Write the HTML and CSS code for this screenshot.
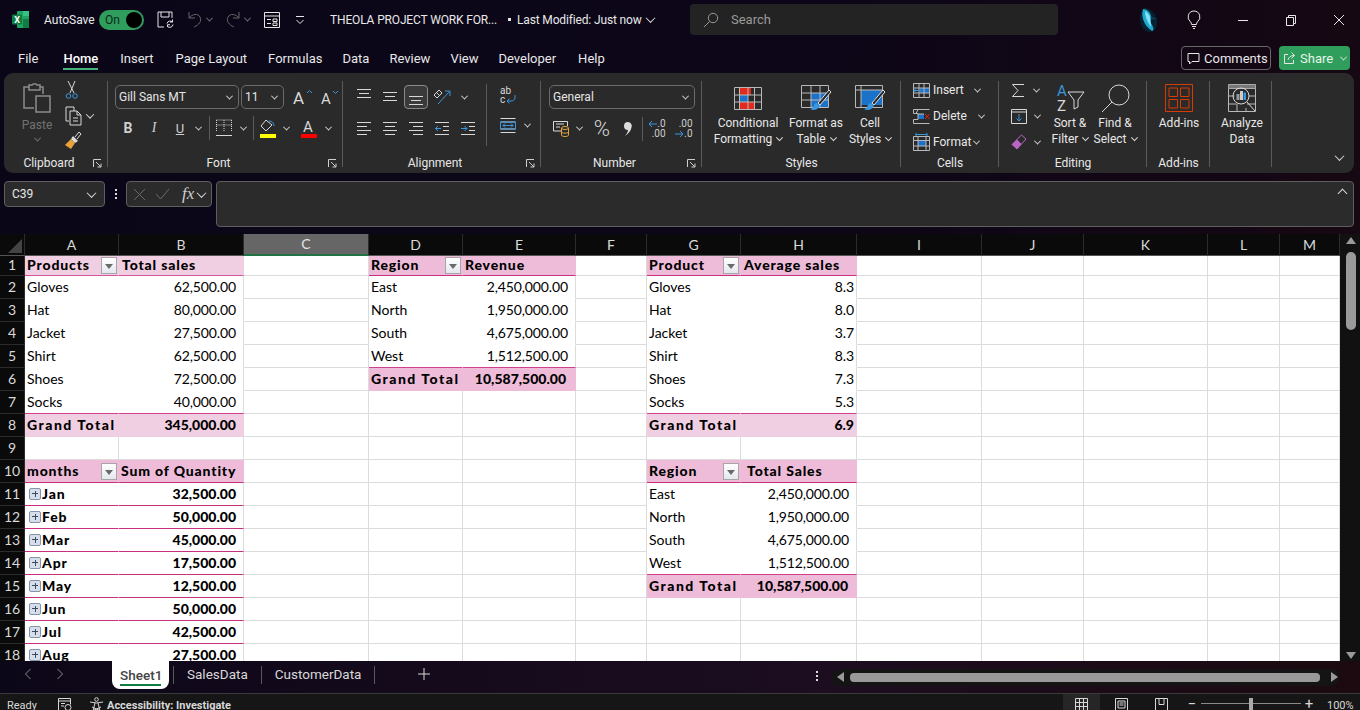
FILE: index.html
```html
<!DOCTYPE html>
<html lang="en">
<head>
<meta charset="utf-8">
<title>THEOLA PROJECT WORK FOR...</title>
<link rel="stylesheet" href="styles.css">
</head>
<body>
<header class="top">
  <svg class="logo" width="17" height="17" viewBox="0 0 17 17"><rect x="5" y="0" width="12" height="17" rx="1" fill="#21a366"/><rect x="11" y="8" width="6" height="9" fill="#107c41"/><rect x="11" y="0" width="6" height="5" fill="#33c481"/><rect x="0" y="3.500" width="10" height="10" rx="1" fill="#107c41"/><text class="logo-x" x="5" y="12">X</text></svg>
  <span class="autosave">AutoSave</span>
  <span class="toggle"><span>On</span><i class="knob"></i></span>
  <svg class="ln save" width="17" height="17" viewBox="0 0 17 17"><path d="M7 16H1V1h14v6M4 1v5h8V1M10 12.500a3.300 3.300 0 0 1 5.500-1.500M16 13.500a3.300 3.300 0 0 1-5.500 2M15.500 8.500V11H13M10.500 16v-2.300H13"/></svg>
  <svg class="dim undo" width="16" height="17" viewBox="0 0 16 17"><path d="M2 1v6h6M2 7c3-4 9-5 11-1 2 4-1 8-6 10"/></svg>
  <span class="chev gray q1"></span>
  <svg class="dim redo" width="16" height="17" viewBox="0 0 16 17"><path d="M14 1v6H8M14 7c-3-4-9-5-11-1-2 4 1 8 6 10"/></svg>
  <span class="chev gray q1"></span>
  <svg class="ln form" width="16" height="16" viewBox="0 0 16 16"><path d="M.5.5h15v15H.5zM.5 4h15M3 7.500h4M9 7h4v2.500H9zM3 11.500h4M9 11h4v2.500H9z"/></svg>
  <svg class="ln custom" width="12" height="12" viewBox="0 0 12 12"><path d="M2 2.500h8M2.500 6l3.500 3.500L9.500 6"/></svg>
  <div class="title"><span class="title-name">THEOLA PROJECT WORK FOR...</span><span class="dot"></span><span>Last Modified: Just now</span><span class="chev big-c"></span></div>
  <div class="search"><svg class="ln2" width="16" height="16" viewBox="0 0 16 16"><circle cx="10" cy="6" r="4.700"/><path d="M6.500 9.500 1 15"/></svg><span>Search</span></div>
  <svg class="avatar" width="22" height="26" viewBox="0 0 22 26"><path d="M7 1c5 0 10 5 12 11 1 7-2 13-7 13-5 0-9-4-10-11C1 8 4 2 7 1z" fill="#052230"/><path d="M5 2c-2 6 0 16 9 22 3-1 1-4-1-8-1-3 1-4 0-7C12 5 9 2 5 2z" fill="#1fa9d0"/><path d="M7 4c0 5 2 11 6 16 0-4-1-7-1-10C11 7 9 5 7 4z" fill="#7fe3f5"/><path d="M12 10c3 0 5 1 6 2-2 1-4 0-6-2z" fill="#0a4a66"/></svg>
  <svg class="ln bulb" width="14" height="19" viewBox="0 0 14 19"><path d="M7 1a6 6 0 0 0-3.500 10.800c.8.700 1 1.700 1 2.700h5c0-1 .2-2 1-2.700A6 6 0 0 0 7 1zM5 16.500h4M6 18.500h2"/></svg>
  <svg class="ln win min" width="12" height="12" viewBox="0 0 12 12"><path d="M1 6.500h10"/></svg>
  <svg class="ln win" width="12" height="12" viewBox="0 0 12 12"><path d="M1.500 3.500h7v8h-7zM3.500 3.500v-2h7v8h-2"/></svg>
  <svg class="ln win" width="12" height="12" viewBox="0 0 12 12"><path d="m1 1 10 10M11 1 1 11"/></svg>
</header>

<nav class="tabs">
  <span class="tab file">File</span><span class="tab home">Home</span><span class="tab t-ins">Insert</span><span class="tab t-pl">Page Layout</span><span class="tab">Formulas</span><span class="tab">Data</span><span class="tab">Review</span><span class="tab">View</span><span class="tab t-dev">Developer</span><span class="tab">Help</span>
  <span class="btn-comments"><svg class="ln" width="13" height="13" viewBox="0 0 13 13"><path d="M1 1.500h11v8H5L2.500 12V9.500H1z"/></svg>Comments</span>
  <span class="btn-share"><svg class="ln" width="14" height="14" viewBox="0 0 14 14"><path d="M5 3.500H1.500v9h9V9M5 9c.5-3 3-4.500 6-4.500M8.500 1.500l3 3-3 3"/></svg>Share<span class="chev small"></span></span>
</nav>

<section class="ribbon">
  <div class="group g-clip">
    <div class="body clip-body">
      <div class="paste">
        <svg class="mute" width="28" height="31" viewBox="0 0 28 31"><path d="M11 26H1V5h5V3h3a3 3 0 0 1 5 0h3v2h3v7M6 5v3h11V5" stroke-width="1.500"/><path d="M13 14h14v16H13z" stroke-width="1.500"/></svg>
        <span class="paste-t">Paste</span>
        <span class="chev gray"></span>
      </div>
      <div class="clip-col">
        <svg width="14" height="20" viewBox="0 0 14 20"><path class="s-w" d="M3 1l6 12M10 1 5 13"/><circle class="s-b" cx="3.500" cy="16" r="2.300"/><circle class="s-b" cx="10" cy="16" r="2.300"/></svg>
        <div class="clip-row"><svg width="17" height="20" viewBox="0 0 17 20"><path class="s-w" d="M4 15H1V1h8v4M5 5h7l4 4v10H5zM12 5v4h4M8 12h5M8 15h5"/></svg><span class="chev c-copy"></span></div>
        <svg width="18" height="20" viewBox="0 0 18 20"><path class="s-w" d="M12 8l4-5-2-2-4 5"/><path d="M8 5l5 5-3 2-4-4z" fill="#ddd"/><path d="M6 8l4 4-4 6-6-4z" fill="#e8a33d"/></svg>
      </div>
    </div>
    <div class="label">Clipboard<svg class="launch" width="9" height="9" viewBox="0 0 9 9"><path d="M.5 8V.500H8M3 3l5 5M8 4.500V8H4.500"/></svg></div>
  </div>

  <div class="group g-font">
    <div class="body">
      <div class="font-r1">
        <div class="combo c-font"><span>Gill Sans MT</span><i class="chev"></i></div>
        <div class="combo c-size"><span>11</span><i class="chev"></i></div>
        <svg class="ltr l-up" width="22" height="18" viewBox="0 0 22 18"><text class="t-a" x="0" y="16">A</text><path class="s-b" d="M14 5l2.500-2.500L19 5"/></svg>
        <svg class="ltr" width="20" height="18" viewBox="0 0 20 18"><text class="t-a2" x="0" y="16">A</text><path class="s-b" d="M12 3l2.500 2.500L17 3"/></svg>
      </div>
      <div class="font-r2">
        <b class="fmt-b">B</b><i class="fmt-i">I</i><u class="fmt-u">U</u><span class="chev"></span>
        <span class="vs"></span>
        <svg width="16" height="18" viewBox="0 0 16 18"><path class="s-w dash" d="M.5 1h15M.5 6h15M8 1v12M.5 1v12M15.500 1v12"/><path class="s-w" d="M0 16.500h16"/></svg><span class="chev"></span>
        <span class="vs"></span>
        <svg width="16" height="19" viewBox="0 0 16 19"><path class="s-w" d="M6 1 1 7l5 5 6-6z"/><path class="s-b" d="M9 2c3 0 5 2 5 5"/><rect y="15" width="16" height="4" fill="#ffff00"/></svg><span class="chev"></span>
        <svg class="shift" width="16" height="19" viewBox="0 0 16 19"><text class="t-c" x="2" y="13">A</text><rect y="15" width="16" height="4" fill="#ff0000"/></svg><span class="chev"></span>
      </div>
    </div>
    <div class="label">Font<svg class="launch" width="9" height="9" viewBox="0 0 9 9"><path d="M.5 8V.500H8M3 3l5 5M8 4.500V8H4.500"/></svg></div>
  </div>

  <div class="group g-align">
    <div class="body align-body">
      <div class="align-main">
        <div class="align-row">
          <svg class="va-t" width="14" height="10" viewBox="0 0 14 10"><path class="s-w" d="M0 .5h14M2 4.500h10M0 8.500h14"/></svg>
          <svg width="14" height="10" viewBox="0 0 14 10"><path class="s-w" d="M0 .5h14M2 4.500h10M0 8.500h14"/></svg>
          <span class="tbtn"><svg class="va-b" width="14" height="10" viewBox="0 0 14 10"><path class="s-w" d="M0 .5h14M2 4.500h10M0 8.500h14"/></svg></span>
          <svg width="18" height="16" viewBox="0 0 18 16"><path class="s-w" d="M1 6l5-5 3 3-5 5zM3 3l4 4"/><path class="s-b" d="M5 15 16 3M12 2h5v5"/></svg>
          <span class="chev"></span>
        </div>
        <div class="align-row">
          <svg width="14" height="13" viewBox="0 0 14 13"><path class="s-w" d="M0 .5h14M0 4.500h10M0 8.500h14M0 12.500h10"/></svg>
          <svg width="14" height="13" viewBox="0 0 14 13"><path class="s-w" d="M0 .5h14M2 4.500h10M0 8.500h14M2 12.500h10"/></svg>
          <svg width="14" height="13" viewBox="0 0 14 13"><path class="s-w" d="M0 .5h14M4 4.500h10M0 8.500h14M4 12.500h10"/></svg>
          <svg width="14" height="13" viewBox="0 0 14 13"><path class="s-w" d="M0 .5h14M8 4.500h6M8 8.500h6M0 12.500h14"/><path class="s-b" d="M6 6.500H0M3 4 .5 6.500 3 9"/></svg>
          <svg width="14" height="13" viewBox="0 0 14 13"><path class="s-w" d="M0 .5h14M8 4.500h6M8 8.500h6M0 12.500h14"/><path class="s-b" d="M0 6.500h6M3.500 4 6 6.500 3.500 9"/></svg>
        </div>
      </div>
      <span class="vs tall"></span>
      <div class="align-side">
        <svg width="16" height="18" viewBox="0 0 16 18"><text class="t-s" x="0" y="7">ab</text><text class="t-s" x="0" y="16">c</text><path class="s-b" d="M15 8v3c0 2-2 3-4 3H7M9.500 11.500 7 14l2.500 2.500"/></svg>
        <div class="merge"><svg width="16" height="15" viewBox="0 0 16 15"><path class="s-w" d="M.5.5h15M.5 14.500h15M.5 4h15M.5 11h15"/><path class="s-b" d="M.5 4h15v7H.5zM3 7.500h10M5 5.500l-2 2 2 2M11 5.500l2 2-2 2"/></svg><span class="chev"></span></div>
      </div>
    </div>
    <div class="label">Alignment<svg class="launch" width="9" height="9" viewBox="0 0 9 9"><path d="M.5 8V.500H8M3 3l5 5M8 4.500V8H4.500"/></svg></div>
  </div>

  <div class="group g-num">
    <div class="body">
      <div class="combo c-gen"><span>General</span><i class="chev"></i></div>
      <div class="num-r">
        <svg width="17" height="17" viewBox="0 0 17 17"><path class="s-w" d="M8 11H.5V1.500h14V6M3 4h8M3 7h4"/><ellipse cx="12" cy="8" rx="3.500" ry="1.500" fill="none" stroke="#e8a33d"/><path d="M8.500 8v7c0 2 7 2 7 0V8M8.500 12c0 1.500 7 1.500 7 0" fill="none" stroke="#e8a33d"/></svg>
        <span class="chev"></span>
        <span class="pct">%</span>
        <svg width="8" height="14" viewBox="0 0 8 14"><path d="M4 0a4 4 0 0 1 3.500 5.500C7 9 4 12 1 14c1.500-2 3-4 3-6a4 4 0 0 1 0-8z" fill="#ddd"/></svg>
        <span class="vs"></span>
        <div class="dec"><span class="d1"><svg width="9" height="8" viewBox="0 0 9 8"><path class="s-b" d="M9 4H1M4 1 1 4l3 3"/></svg>.0</span><span>.00</span></div>
        <div class="dec dec2"><span>.00</span><span class="d1"><svg width="9" height="8" viewBox="0 0 9 8"><path class="s-b" d="M0 4h8M5 1l3 3-3 3"/></svg>.0</span></div>
      </div>
    </div>
    <div class="label">Number<svg class="launch" width="9" height="9" viewBox="0 0 9 9"><path d="M.5 8V.500H8M3 3l5 5M8 4.500V8H4.500"/></svg></div>
  </div>

  <div class="group g-styles">
    <div class="body bigs">
      <div class="big b-cond">
        <div class="big-ic"><svg width="28" height="23" viewBox="0 0 28 23"><rect x="5" y="1" width="12" height="7" fill="#e3281c"/><rect x="5" y="8" width="9" height="7" fill="#1a73c8"/><rect x="5" y="15" width="15" height="7" fill="#e3281c"/><path class="s-g" d="M.5.500h27v22H.5zM.5 8h27M.5 15h27M5.500.500v22M14 .5v22M20.500.500v22"/></svg></div>
        <div class="big-t">Conditional</div><div class="big-t">Formatting<span class="chev tiny"></span></div>
      </div>
      <div class="big b-tbl">
        <div class="big-ic"><svg width="31" height="27" viewBox="0 0 31 27"><rect x="10" y="8" width="18" height="14" fill="#1a73c8"/><path class="s-g" d="M.5.500h27v22H.5zM.5 8h27M.5 15h27M10 .5v22M19 .5v22"/><path d="M28 5 17 18l2 2 11-13z" fill="#2a2a2a" stroke="#ddd"/><path d="M16 18c-3 0-3 3-4 4-.5 1-2 2-3 2 3 2 8 1 10-3z" fill="#3a96dd"/></svg></div>
        <div class="big-t">Format as</div><div class="big-t">Table<span class="chev tiny"></span></div>
      </div>
      <div class="big b-cell">
        <div class="big-ic"><svg width="31" height="27" viewBox="0 0 31 27"><rect x="6" y="5" width="21" height="15" fill="#1a73c8"/><path class="s-g" d="M.5.500h27v22H.5zM.5 5h27M6 .5v22"/><path d="M28 5 17 18l2 2 11-13z" fill="#2a2a2a" stroke="#ddd"/><path d="M16 18c-3 0-3 3-4 4-.5 1-2 2-3 2 3 2 8 1 10-3z" fill="#3a96dd"/></svg></div>
        <div class="big-t">Cell</div><div class="big-t">Styles<span class="chev tiny"></span></div>
      </div>
    </div>
    <div class="label">Styles</div>
  </div>

  <div class="group g-cells">
    <div class="body cell-list">
      <div class="cell-row"><svg width="17" height="15" viewBox="0 0 17 15"><rect x="7" y="5" width="9" height="5" fill="#1a73c8"/><path class="s-g" d="M.5.500h16v14H.5zM.5 5h16M.5 10h16M6 .5v14M11 .5v14"/><path class="s-b" d="M8 7.500H1M3.500 5 1 7.500 3.500 10"/></svg><span>Insert</span><i class="chev c-ins"></i></div>
      <div class="cell-row"><svg width="17" height="15" viewBox="0 0 17 15"><rect x="5" y="5" width="6" height="5" fill="#1a73c8"/><path class="s-g" d="M.5.500h16M.5 14.500h16M.5.500v4h4.500v6H.5v4M5 .5l-2 4M11 5H5"/><path d="m12 5 4.500 5M16.500 5 12 10" stroke="#e3281c" fill="none"/></svg><span>Delete</span><i class="chev c-del"></i></div>
      <div class="cell-row"><svg width="17" height="18" viewBox="0 0 17 18"><rect x="5" y="7" width="8" height="6" fill="#1a73c8"/><path class="s-g" d="M.5 3.500h16v14H.5zM.5 7.500h16M.5 13h16M5 3.500v14M13 3.500v14"/><path class="s-b" d="M3 1.500h11M3 0v3M14 0v3"/></svg><span>Format</span><i class="chev c-fmt"></i></div>
    </div>
    <div class="label">Cells</div>
  </div>

  <div class="group g-edit">
    <div class="body edit-body">
      <div class="edit-col">
        <div class="edit-row"><svg width="14" height="15" viewBox="0 0 14 15"><path class="s-w" d="M13 1.500H1.500L7 7.500l-5.500 6H13"/></svg><span class="chev e1"></span></div>
        <div class="edit-row"><svg width="16" height="15" viewBox="0 0 16 15"><path class="s-w" d="M.5.500h15v14H.5zM.5 3h15"/><path class="s-b" d="M8 5v7M5.500 9.500 8 12l2.500-2.500"/></svg><span class="chev e2"></span></div>
        <div class="edit-row"><svg width="16" height="16" viewBox="0 0 16 16"><path d="M10.500 1 15 5 6 15 1 10.500z" fill="#2a2a2a" stroke="#b865c4"/><path d="M6 5.500l4.500 4.500L6 15 1 10.500z" fill="#b865c4"/></svg><span class="chev e2"></span></div>
      </div>
      <div class="big b-sort">
        <div class="big-ic"><svg width="29" height="28" viewBox="0 0 29 28"><text class="t-az blue" x="1" y="12">A</text><text class="t-az" x="1" y="27">Z</text><path class="s-w" d="M12 8h16l-6 8v7l-4 2v-9z"/></svg></div>
        <div class="big-t">Sort &amp;</div><div class="big-t">Filter<span class="chev tiny"></span></div>
      </div>
      <div class="big b-find">
        <div class="big-ic"><svg width="29" height="29" viewBox="0 0 29 29"><circle class="s-w" cx="18" cy="11" r="10"/><path class="s-w" d="M11 18 1 28"/></svg></div>
        <div class="big-t">Find &amp;</div><div class="big-t">Select<span class="chev tiny"></span></div>
      </div>
    </div>
    <div class="label">Editing</div>
  </div>

  <div class="group g-add">
    <div class="body bigs">
      <div class="big b-add">
        <div class="big-ic"><svg width="28" height="28" viewBox="0 0 28 28"><path class="s-r" d="M.5.500h27v27H.5zM4 4h8.500v8.500H4zM15.500 4H24v8.500h-8.500zM4 15.500h8.500V24H4zM15.500 15.500H24V24h-8.500z"/></svg></div>
        <div class="big-t">Add-ins</div>
      </div>
    </div>
    <div class="label">Add-ins</div>
  </div>

  <div class="group g-ana">
    <div class="body bigs">
      <div class="big b-add">
        <div class="big-ic"><svg width="28" height="28" viewBox="0 0 28 28"><path d="M.5.500h27v4H.5z" fill="#777" stroke="#aaa"/><path class="s-g" d="M.5 4.500v23h27v-23M.5 12h6M21 12h6.500M.5 20h8M19 20h8.500M9 20v7.500M18 24v3.500"/><circle class="s-w" cx="13" cy="12" r="8"/><path class="s-w" d="m19 18 8 9"/><rect x="8.500" y="10" width="3" height="6" fill="#999"/><rect x="12" y="7" width="3" height="9" fill="#ccc"/><rect x="15.500" y="8.500" width="2.500" height="7.500" fill="#3a96dd"/></svg></div>
        <div class="big-t">Analyze</div><div class="big-t">Data</div>
      </div>
    </div>
  </div>
  <span class="chev collapse"></span>
</section>

<section class="fbar">
  <div class="namebox"><span>C39</span><i class="chev"></i></div>
  <div class="fdots"><i></i><i></i><i></i></div>
  <div class="fxbox">
    <svg width="13" height="13" viewBox="0 0 13 13"><path class="s-dim" d="m1 1 11 11M12 1 1 12"/></svg>
    <svg width="15" height="12" viewBox="0 0 15 12"><path class="s-dim" d="m1 6 4.500 5L14 1"/></svg>
    <em>fx</em><i class="chev"></i>
  </div>
  <div class="finput"><span class="chev up"></span></div>
</section>

<section class="grid-wrap">
  <div class="clip">
    <table class="sheet">
      <colgroup><col class="w25"><col class="w94"><col class="w125"><col class="w125"><col class="w94"><col class="w113"><col class="w71"><col class="w94"><col class="w116"><col class="w125"><col class="w102"><col class="w124"><col class="w72"><col class="w60"></colgroup>
      <thead><tr><th class="corner"><span></span></th><th>A</th><th>B</th><th class="sel">C</th><th>D</th><th>E</th><th>F</th><th>G</th><th>H</th><th>I</th><th>J</th><th>K</th><th>L</th><th>M</th></tr></thead>
      <tbody>
<tr class="r1"><th>1</th><td class="h1 b">Products<span class="fb"></span></td><td class="h1 b pl3">Total sales</td><td></td><td class="h2 b">Region<span class="fb"></span></td><td class="h2 b">Revenue</td><td></td><td class="h2 b">Product<span class="fb"></span></td><td class="h2 b pl3">Average sales</td><td></td><td></td><td></td><td></td><td></td></tr>
<tr><th>2</th><td class="n">Gloves</td><td class="e r">62,500.00</td><td></td><td class="n">East</td><td class="e r">2,450,000.00</td><td></td><td class="n">Gloves</td><td class="e r p2">8.3</td><td></td><td></td><td></td><td></td><td></td></tr>
<tr><th>3</th><td class="n">Hat</td><td class="e r">80,000.00</td><td></td><td class="n">North</td><td class="e r">1,950,000.00</td><td></td><td class="n">Hat</td><td class="e r p2">8.0</td><td></td><td></td><td></td><td></td><td></td></tr>
<tr><th>4</th><td class="n">Jacket</td><td class="e r">27,500.00</td><td></td><td class="n">South</td><td class="e r">4,675,000.00</td><td></td><td class="n">Jacket</td><td class="e r p2">3.7</td><td></td><td></td><td></td><td></td><td></td></tr>
<tr><th>5</th><td class="n">Shirt</td><td class="e r">62,500.00</td><td></td><td class="n lp">West</td><td class="e r lp">1,512,500.00</td><td></td><td class="n">Shirt</td><td class="e r p2">8.3</td><td></td><td></td><td></td><td></td><td></td></tr>
<tr><th>6</th><td class="n">Shoes</td><td class="e r">72,500.00</td><td></td><td class="h2 b gtl">Grand Total</td><td class="h2 b r gt">10,587,500.00</td><td></td><td class="n">Shoes</td><td class="e r p2">7.3</td><td></td><td></td><td></td><td></td><td></td></tr>
<tr><th>7</th><td class="n lp">Socks</td><td class="e r lp">40,000.00</td><td></td><td></td><td></td><td></td><td class="n lp">Socks</td><td class="e r p2 lp">5.3</td><td></td><td></td><td></td><td></td><td></td></tr>
<tr><th>8</th><td class="g1 b gtl">Grand Total</td><td class="g1 b r">345,000.00</td><td></td><td></td><td></td><td></td><td class="g1 b gtl">Grand Total</td><td class="g1 b r p2">6.9</td><td></td><td></td><td></td><td></td><td></td></tr>
<tr><th>9</th><td></td><td></td><td></td><td></td><td></td><td></td><td></td><td></td><td></td><td></td><td></td><td></td><td></td></tr>
<tr><th>10</th><td class="h2 b">months<span class="fb"></span></td><td class="h2 b">Sum of Quantity</td><td></td><td></td><td></td><td></td><td class="h2 b">Region<span class="fb"></span></td><td class="h2 b tot">Total Sales</td><td></td><td></td><td></td><td></td><td></td></tr>
<tr><th>11</th><td class="m b"><span class="exp"></span>Jan</td><td class="me b r">32,500.00</td><td></td><td></td><td></td><td></td><td class="n">East</td><td class="e r">2,450,000.00</td><td></td><td></td><td></td><td></td><td></td></tr>
<tr><th>12</th><td class="m b"><span class="exp"></span>Feb</td><td class="me b r">50,000.00</td><td></td><td></td><td></td><td></td><td class="n">North</td><td class="e r">1,950,000.00</td><td></td><td></td><td></td><td></td><td></td></tr>
<tr><th>13</th><td class="m b"><span class="exp"></span>Mar</td><td class="me b r">45,000.00</td><td></td><td></td><td></td><td></td><td class="n">South</td><td class="e r">4,675,000.00</td><td></td><td></td><td></td><td></td><td></td></tr>
<tr><th>14</th><td class="m b"><span class="exp"></span>Apr</td><td class="me b r">17,500.00</td><td></td><td></td><td></td><td></td><td class="n lp">West</td><td class="e r lp">1,512,500.00</td><td></td><td></td><td></td><td></td><td></td></tr>
<tr><th>15</th><td class="m b"><span class="exp"></span>May</td><td class="me b r">12,500.00</td><td></td><td></td><td></td><td></td><td class="h2 b gtl">Grand Total</td><td class="h2 b r gt2">10,587,500.00</td><td></td><td></td><td></td><td></td><td></td></tr>
<tr><th>16</th><td class="m b"><span class="exp"></span>Jun</td><td class="me b r">50,000.00</td><td></td><td></td><td></td><td></td><td></td><td></td><td></td><td></td><td></td><td></td><td></td></tr>
<tr><th>17</th><td class="m b"><span class="exp"></span>Jul</td><td class="me b r">42,500.00</td><td></td><td></td><td></td><td></td><td></td><td></td><td></td><td></td><td></td><td></td><td></td></tr>
<tr><th>18</th><td class="m b"><span class="exp"></span>Aug</td><td class="me b r">27,500.00</td><td></td><td></td><td></td><td></td><td></td><td></td><td></td><td></td><td></td><td></td><td></td></tr>
      </tbody>
    </table>
  </div>
  <div class="vbar"><span class="tri-up"></span><span class="vthumb"></span><span class="tri-down"></span></div>
</section>

<section class="sheets">
  <svg class="nav" width="8" height="12" viewBox="0 0 8 12"><path d="M6.500 1 1.500 6l5 5"/></svg>
  <svg class="nav nav2" width="8" height="12" viewBox="0 0 8 12"><path d="m1.500 1 5 5-5 5"/></svg>
  <span class="stab active">Sheet1</span>
  <span class="ssep first"></span><span class="stab">SalesData</span>
  <span class="ssep"></span><span class="stab">CustomerData</span>
  <span class="ssep"></span>
  <svg class="plus" width="12" height="12" viewBox="0 0 12 12"><path class="s-w" d="M6 0v12M0 6h12"/></svg>
  <div class="sdots"><i></i><i></i><i></i></div>
  <div class="hbar"><span class="tri-l"></span><span class="hthumb"></span><span class="tri-r"></span></div>
</section>

<footer class="status">
  <span class="ready">Ready</span>
  <svg class="macro" width="14" height="13" viewBox="0 0 14 13"><path class="s-w" d="M8 12.500H.5V.5h12v6M.5 3h12M3 5.500h4M3 8h3"/><circle class="s-w" cx="10" cy="9.500" r="3"/></svg>
  <svg class="a11y" width="15" height="15" viewBox="0 0 15 15"><circle class="s-w" cx="7.500" cy="2.500" r="1.800"/><path class="s-w" d="M1 5l6.500 1L14 5M6 6l-2 8M9 6l2 8M3 10l9 4M12 10 3 14"/></svg>
  <span class="acc">Accessibility: Investigate</span>
  <div class="views">
    <span class="view on"><svg width="13" height="13" viewBox="0 0 13 13"><path class="s-w" d="M.5.500h12v12H.5zM4.500.5v12M8.500.5v12M.5 4.500h12M.5 8.500h12"/></svg></span>
    <span class="view"><svg width="13" height="13" viewBox="0 0 13 13"><path class="s-w" d="M.5.500h12v12H.5zM3 3h7v7H3zM4.500 5h4M4.500 7h4"/></svg></span>
    <span class="view"><svg width="13" height="13" viewBox="0 0 13 13"><path class="s-w" d="M.5.500h12v12H.5zM4 .5v6h5v-6"/></svg></span>
  </div>
  <span class="zm zm1">−</span>
  <div class="slider"><i></i></div>
  <span class="zm zm2">+</span>
  <span class="pctz">100%</span>
</footer>
</body>
</html>
```

FILE: styles.css
```css
*{box-sizing:border-box}
html,body{margin:0;height:710px;overflow:hidden}
body{width:1360px;background:linear-gradient(100deg,#0a0618 0%,#0c0618 55%,#140714 85%,#170a12 100%);font-family:Roboto,"Noto Sans",sans-serif;font-size:12px;color:#e8e8e8}
svg{display:block;flex:none;fill:none;stroke-width:1;overflow:visible}
svg text{font-family:Roboto,sans-serif;stroke:none}
.ln path,.ln circle{stroke:#e6e6e6}
.ln2 path,.ln2 circle{stroke:#999}
.dim path{stroke:#666}
.mute path{stroke:#8c8c8c}
.s-w{stroke:#d8d8d8}
.s-b{stroke:#3a96dd}
.s-g{stroke:#b9b9b9}
.s-r{stroke:#d83b01}
.s-dim{stroke:#6a6a6a}
.dash{stroke-dasharray:1 1}
.chev{display:inline-block;width:6px;height:6px;border-right:1px solid #d8d8d8;border-bottom:1px solid #d8d8d8;transform:rotate(45deg) translate(-1px,-1px);flex:none}
.chev.gray{border-color:#777}

/* title bar */
.top{display:flex;align-items:center;height:39px;padding-left:12px}
.logo-x{font-size:9px;font-weight:700;fill:#fff;text-anchor:middle}
.autosave{width:55px;margin-left:15px;font-size:12px}
.toggle{display:flex;align-items:center;justify-content:space-between;width:45px;height:20px;padding:0 2px 0 6px;border-radius:10px;background:#2f9e5c;color:#0b2a18;font-size:12px}
.knob{width:16px;height:16px;border-radius:50%;background:#000}
.save{margin-left:13px}
.undo{margin-left:13px}
.redo{margin-left:9px}
.q1{margin:0 4px;width:5px;height:5px}
.form{margin-left:10px}
.custom{margin-left:14px}
.title{display:flex;align-items:center;width:360px;margin-left:24px;font-size:12px;letter-spacing:-.15px}
.title-name{width:166px;white-space:nowrap}
.dot{width:3px;height:3px;margin:0 6px 0 12px;background:#e6e6e6}
.big-c{width:7px;height:7px;margin-left:5px}
.search{display:flex;align-items:center;gap:12px;width:368px;height:31px;padding-left:13px;border-radius:4px;background:#232323;color:#9a9a9a;font-size:13px}
.avatar{margin-left:80px}
.bulb{margin-left:27px}
.win{margin-left:36px}

/* ribbon tabs */
.tabs{display:flex;align-items:center;height:34px;padding:4px 10px 0 18px;font-size:13px}
.tab{position:relative;margin-right:20px}
.file{margin-right:25px}
.home{margin-right:22px;font-weight:500;color:#fff}
.t-ins{margin-right:22px}
.t-pl{margin-right:21px}
.t-dev{margin-right:22px}
.home::after{content:"";position:absolute;left:0;right:0;bottom:-4px;height:2px;background:#47b27a}
.btn-comments{display:flex;align-items:center;gap:4px;width:90px;height:24px;margin-left:auto;padding-left:5px;border:1px solid #686868;border-radius:4px}
.btn-share{display:flex;align-items:center;gap:3px;width:71px;height:24px;margin-left:8px;padding-left:4px;border-radius:4px;background:#2f9e5c;color:#e6f4ea}
.chev.small{width:5px;height:5px;margin-left:5px}

/* ribbon */
.ribbon{position:relative;display:flex;width:1350px;height:100px;margin-left:4px;border-radius:9px;background:#2a2a2a}
.group{position:relative;display:flex;flex-direction:column;height:100px;padding-top:8px}
.group::after{content:"";position:absolute;top:8px;bottom:6px;right:0;width:1px;background:#5a5a5a}
.body{height:74px;flex:none;display:flex;flex-direction:column;gap:7px;padding-top:4px}
.label{position:relative;height:16px;line-height:16px;text-align:center;padding-right:14px;font-size:12px}
.launch{position:absolute;right:6px;top:4px}
.launch path{stroke:#cfcfcf}
.g-clip{width:104px}
.g-font{width:235px}
.g-align{width:198px}
.g-num{width:161px}
.g-styles{width:199px}
.g-cells{width:98px}
.g-edit{width:148px}
.g-add{width:63px}
.g-ana{width:62px}
.g-styles .label,.g-cells .label,.g-edit .label,.g-add .label{padding-right:0}

.clip-body{flex-direction:row;gap:6px;padding:0 0 0 16px}
.paste{display:flex;flex-direction:column;align-items:center;width:34px;padding-top:1px}
.paste-t{margin-top:4px;line-height:16px;color:#727272}
.paste .chev{margin-top:4px;width:5px;height:5px}
.clip-col{display:flex;flex-direction:column;gap:5.500px;margin-top:-1px;padding-left:5px}
.clip-row{display:flex;align-items:center}
.c-copy{margin-left:5px}

.combo{display:flex;align-items:center;justify-content:space-between;height:24px;padding:0 6px 0 3px;border:1px solid #6c6c6c;border-radius:5px;color:#e6e6e6}
.combo .chev{width:5px;height:5px}
.font-r1{display:flex;align-items:center;padding-left:7px;gap:2px}
.c-font{width:124px}
.c-size{width:43px}
.ltr{margin-left:4px}
.l-up{margin-left:7px}
.t-a{font-size:17px;fill:#d8d8d8}
.t-a2{font-size:15px;fill:#d8d8d8}
.t-c{font-size:15px;fill:#d8d8d8}
.t-s{font-size:10px;fill:#d8d8d8}
.t-az{font-size:15px;fill:#d8d8d8}
.t-az.blue{fill:#3a96dd}
.font-r2{display:grid;grid-template-columns:26px 26px 26px 10px 12px 18px 20px 1px 28px 8px 33px 10px;justify-items:center;align-items:center;height:24px;padding-left:7px}
.shift{margin-left:5px}
.fmt-b{font-size:14px;color:#cfcfcf;font-family:Roboto,sans-serif}
.fmt-i{font-family:"Liberation Serif",serif;font-size:14px;color:#cfcfcf}
.fmt-u{font-size:13px;color:#cfcfcf}
.vs{display:block;width:1px;height:24px;background:#5a5a5a}
.font-r2 .chev,.num-r .chev,.align-row .chev,.merge .chev{width:5px;height:5px}

.align-body{flex-direction:row;gap:5px;padding-left:8px;padding-top:4px}
.align-main{display:flex;flex-direction:column;gap:7px}
.align-row{display:grid;grid-template-columns:repeat(5,26px);justify-items:center;align-items:center;height:24px;width:130px}
.tbtn{display:flex;align-items:center;justify-content:center;width:24px;height:24px;border:1px solid #8a8a8a;border-radius:4px;background:#3a3a3a}
.va-t{margin-bottom:7px}
.va-b{margin-top:7px}
.align-row .chev{margin-left:-8px}
.vs.tall{height:62px;margin-top:-1px}
.align-side{display:flex;flex-direction:column;gap:13px;padding:2px 0 0 8px}
.merge{display:flex;align-items:center;gap:9px}
.g-num .body{padding-left:8px}
.c-gen{width:146px}
.num-r{display:grid;grid-template-columns:24px 12px 34px 18px 10px 20px 34px;justify-items:center;align-items:center;height:24px;padding-left:0}
.pct{font-size:22px;font-weight:300;color:#d8d8d8}
.dec{display:flex;flex-direction:column;align-items:flex-end;font-size:10px;line-height:10px;color:#cfcfcf}
.d1{display:flex;align-items:center}

.bigs{flex-direction:row;gap:0;padding-top:0;padding-left:8px}
.big{display:flex;flex-direction:column;align-items:center;flex:none}
.big-ic{display:flex;align-items:center;justify-content:center;height:34px}
.big-t{line-height:16px;white-space:nowrap}
.b-cond{width:76px}
.b-tbl{width:60px}
.b-cell{width:48px}
.chev.tiny{width:5px;height:5px;margin-left:5px;transform:rotate(45deg) translate(-2px,-2px)}
.cell-list{display:block;gap:0;padding:0 0 0 12px}
.cell-list .cell-row:first-child{margin-top:-4px}
.cell-row{display:flex;align-items:center;height:26px}
.cell-row span{margin-left:3px}
.cell-row .chev{width:5px;height:5px}
.c-ins{margin-left:11px}
.c-del{margin-left:12px}
.c-fmt{margin-left:3px}
.edit-body{flex-direction:row;gap:0;padding:0 0 0 12px}
.edit-col{display:flex;flex-direction:column;margin-top:-4px;width:34px}
.edit-row{display:flex;align-items:center;height:26px}
.edit-row .chev{width:5px;height:5px}
.e1{margin-left:9px}
.e2{margin-left:8px}
.b-sort{width:50px}
.b-find{width:40px}
.b-add{width:46px}
.g-add .bigs{padding-left:9px}
.g-ana .bigs{padding-left:9px}
.collapse{position:absolute;right:11px;bottom:12px;width:7px;height:7px}

/* formula bar */
.fbar{display:flex;height:61px;padding:8px 0 0 4px;color:#e6e6e6}
.namebox{display:flex;align-items:center;justify-content:space-between;width:101px;height:26px;padding:0 9px 0 7px;border:1px solid #5f5f5f;border-radius:4px;background:#2b2b2b}
.namebox .chev,.fxbox .chev{width:7px;height:7px}
.fdots{display:flex;flex-direction:column;justify-content:center;gap:2px;align-items:center;width:21px;height:26px}
.fdots i,.sdots i{display:block;width:2px;height:2px;background:#ddd}
.fxbox{display:flex;align-items:center;gap:9px;width:86px;height:26px;padding-left:6px;border:1px solid #5f5f5f;border-radius:4px;background:#2b2b2b}
.fxbox em{font-family:"Liberation Serif",serif;font-size:17px;font-style:italic;margin-left:3px;color:#cfcfcf}
.fxbox .chev{margin-left:-5px}
.finput{position:relative;width:1138px;height:46px;margin-left:4px;border:1px solid #5f5f5f;border-radius:4px;background:#2b2b2b}
.chev.up{position:absolute;right:7px;top:8px;width:7px;height:7px;transform:rotate(225deg)}

/* sheet */
.grid-wrap{display:flex;height:427px}
.clip{width:1340px;height:427px;overflow:hidden;background:#fff}
.sheet{width:1340px;table-layout:fixed;border-collapse:separate;border-spacing:0;font-family:Lato,"Liberation Sans",sans-serif;font-size:14px;color:#000}
.w25{width:25px}.w94{width:94px}.w125{width:125px}.w113{width:113px}.w71{width:71px}.w116{width:116px}.w102{width:102px}.w124{width:124px}.w72{width:72px}.w60{width:60px}
.sheet th{font-weight:400;background:#0a0a0a;color:#d9d9d9;text-align:center;padding:0 0 1px;border-right:1px solid #2c2c2c}
.sheet thead th{height:22px;border-bottom:1px solid #555}
.sheet thead th.sel{background:#666;color:#e6e6e6;border-bottom:2px solid #217346}
.corner{position:relative}
.corner span{position:absolute;right:2px;bottom:2px;width:0;height:0;border-left:14px solid transparent;border-bottom:14px solid #444}
.sheet tbody th{border-bottom:1px solid #2c2c2c}
.sheet tbody tr{height:23px}
.sheet tbody tr.r1{height:20px}
.sheet td{position:relative;height:23px;padding:0 3px 2px 2px;border-right:1px solid #dcdcdc;border-bottom:1px solid #dcdcdc;white-space:nowrap;overflow:hidden}
.sheet tr.r1 td,.sheet tr.r1 th{height:20px;padding-bottom:2px}
.sheet td.n{border-right-color:#fff;border-bottom-color:#fff}
.sheet td.e{border-bottom-color:#fff}
.sheet td.r{text-align:right;padding-right:7px;letter-spacing:-.12px}
.sheet td.p2{padding-right:2px}
.sheet td.lp{border-bottom-color:#d0408f}
.sheet td.b{font-weight:900;letter-spacing:.85px}
.sheet td.b.r{letter-spacing:0}
.sheet td.gtl{letter-spacing:1.5px}
.sheet td.pl3{padding-left:3px}
.sheet td.h1{background:#f1cfe2;border-color:#f1cfe2;border-bottom-color:#d6559d}
.sheet td.h2{background:#eebcd8;border-color:#eebcd8;border-bottom-color:#eebcd8}
.sheet td.g1{background:#f1cfe2;border-color:#f1cfe2}
.sheet td.gt{padding-right:9px;letter-spacing:-.3px}
.sheet td.gt2{padding-right:8px;letter-spacing:-.3px}
.sheet tr:nth-child(10) td.h2,.sheet tr:nth-child(1) td.h2{border-bottom-color:#c7317f}
.sheet td.tot{padding-left:6px}
.sheet td.m{border-right-color:#fff;border-bottom-color:#c7317f;padding-left:4px}
.sheet td.me{border-bottom-color:#c7317f}
.fb{position:absolute;right:1px;top:3px;width:16px;height:17px;border:1px solid #a6a6a6;background:linear-gradient(#fff,#e4e7ee)}
.r1 .fb{top:1px}
.fb::after{content:"";position:absolute;left:3px;top:6px;border:4px solid transparent;border-top:5px solid #6a6a6a;border-bottom:0}
.exp{display:inline-block;width:12px;height:12px;margin-right:1px;vertical-align:-1px;border:1px solid #8494ad;border-radius:2px;background:linear-gradient(#3c4a5e,#3c4a5e) center/6px 1px no-repeat,linear-gradient(#3c4a5e,#3c4a5e) center/1px 6px no-repeat,#d6deeb}
.vbar{position:relative;width:20px;height:427px;background:#111}
.tri-up,.tri-down{position:absolute;left:6px;border:5px solid transparent}
.tri-up{top:3px;border-bottom:7px solid #9a9a9a;border-top:0}
.tri-down{bottom:2px;border-top:7px solid #9a9a9a;border-bottom:0}
.vthumb{position:absolute;left:6px;top:18px;width:10px;height:78px;border-radius:5px;background:#9a9a9a}

/* sheet tabs */
.sheets{display:flex;align-items:flex-start;height:33px;border-bottom:1px solid #3a3a3a;background:linear-gradient(90deg,#0c0718,#1c0d20 60%,#1c0a10)}
.nav{margin:7px 0 0 24px}
.nav path{stroke:#8a8a8a}
.nav2{margin-left:24px}
.stab{margin-top:3px;font-size:13.500px;line-height:20px;color:#d8d8d8;white-space:nowrap}
.stab.active{width:57px;height:28px;margin:0 0 0 48px;padding:4px 0 0 8px;border-radius:0 0 8px 8px;background:#fff;color:#444;font-weight:500;position:relative}
.stab.active::after{content:"";position:absolute;left:8px;right:8px;bottom:3px;height:2px;background:#107c41}
.ssep{width:1px;height:18px;margin:5px 13px 0 13px;background:#5a5a5a}
.ssep.first{margin-left:4px}
.plus{margin:7px 0 0 30px}
.sdots{display:flex;flex-direction:column;gap:2px;margin:10px 0 0 386px}
.hbar{position:relative;width:507px;height:17px;margin:8px 0 0 14px;border-radius:8px;background:#141414}
.tri-l,.tri-r{position:absolute;top:3px;border:5px solid transparent}
.tri-l{left:5px;border-right:7px solid #9a9a9a;border-left:0}
.tri-r{right:1px;border-left:7px solid #9a9a9a;border-right:0}
.hthumb{position:absolute;left:18px;top:4px;width:470px;height:9px;border-radius:4px;background:#999}

/* status bar */
.status{display:flex;height:17px;overflow:hidden;background:#161616;font-size:11px;color:#d8d8d8;line-height:23px}
.ready{margin-left:7px;width:51px}
.macro{margin-top:4px}
.a11y{margin:3px 0 0 17px}
.acc{margin-left:3px;font-weight:700;width:126px;white-space:nowrap}
.views{display:flex;margin-left:830px}
.view{display:flex;align-items:flex-start;justify-content:center;width:38px;height:17px;padding-top:4px;margin-right:2px}
.view.on{background:#262626;width:37px}
.zm{width:12px;font-size:15px;line-height:20px;text-align:center}
.zm1{margin-left:4px}
.zm2{margin-left:2px}
.slider{position:relative;width:100px;height:1px;margin:9px 0 0 3px;background:#8a8a8a}
.slider i{position:absolute;left:48px;top:-5px;width:4px;height:12px;background:#aaa}
.pctz{margin-left:12px}
```
